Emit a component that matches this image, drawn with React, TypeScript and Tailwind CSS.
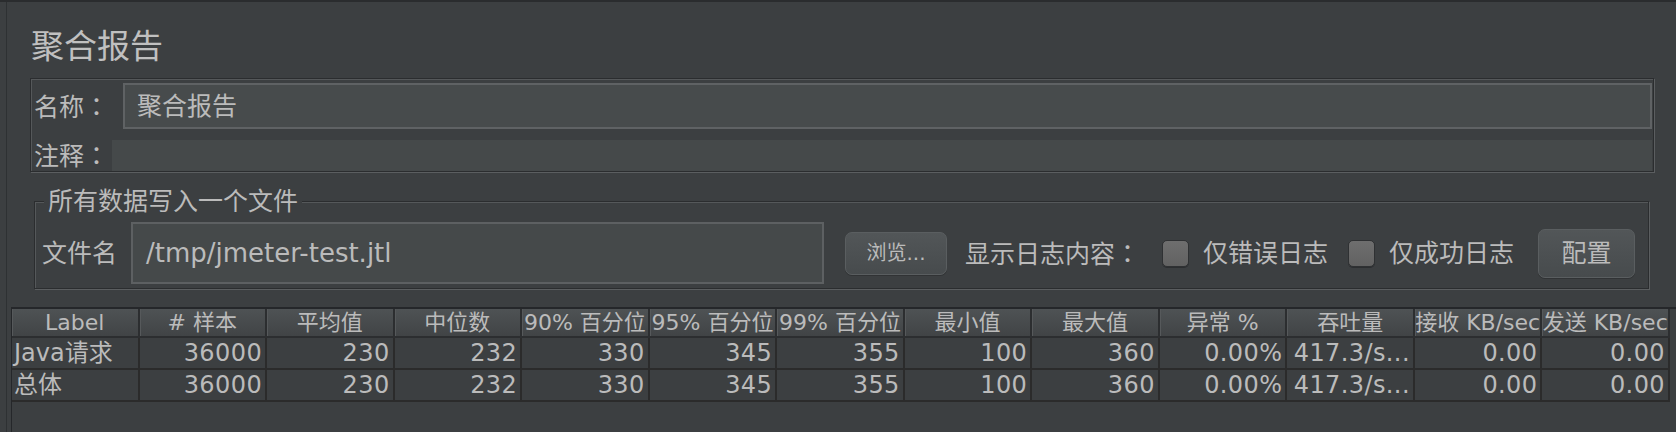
import React from "react";

const columns = [
    "Label", "# 样本", "平均值", "中位数", "90% 百分位", "95% 百分位", "99% 百分位",
    "最小值", "最大值", "异常 %", "吞吐量", "接收 KB/sec", "发送 KB/sec",
];

const rows = [
    ["Java请求", "36000", "230", "232", "330", "345", "355", "100", "360", "0.00%", "417.3/s...", "0.00", "0.00"],
    ["总体", "36000", "230", "232", "330", "345", "355", "100", "360", "0.00%", "417.3/s...", "0.00", "0.00"],
];

// centred full-width colon, as in the Japanese cut of the font
function Colon() {
    return <span className="font-['Noto_Sans_CJK_JP',sans-serif]">：</span>;
}

function Checkbox() {
    return (
        <div className="w-[27px] h-[27px] rounded-[5px] border border-[#2f3133] bg-gradient-to-b from-[#6e6e6e] to-[#626262] shadow-[0_1px_0_#2c2e30]"/>
    );
}

function Button({children, className}: { children: React.ReactNode; className: string }) {
    return (
        <button
            className={"flex items-center justify-center rounded-[7px] border border-[#5a5e60] bg-gradient-to-b from-[#525658] to-[#474b4d] text-[#bbbbbb] shadow-[0_1px_0_#313335] " + className}>
            {children}
        </button>
    );
}

export default function App() {
    return (
        <div
            className="w-[1676px] h-[432px] overflow-hidden bg-[#3c3f41] text-[#bbbbbb] flex flex-col font-['DejaVu_Sans','Noto_Sans_CJK_SC',sans-serif]">
            <div className="h-[2px] bg-[#2a2c2e]"/>
            <div className="flex-1 flex">
                <div className="w-[6px]"/>
                <div className="w-px bg-[#2e3133]"/>
                <div className="flex-1 flex flex-col">
                    {/* title */}
                    <div className="mt-[28px] ml-[24px] text-[33px] leading-[33px] text-[#c0c0c0]">聚合报告</div>

                    {/* name / comment */}
                    <div
                        className="mt-[15px] ml-[23px] w-[1624px] border border-[#2b2d2f] shadow-[1px_1px_0_#5b5e60,inset_1px_1px_0_#55585a] pt-[4px] pr-px">
                        <div className="flex items-center h-[46px]">
                            <div className="w-[92px] pl-[3px] text-[25px] leading-[25px]">名称<Colon/></div>
                            <div
                                className="flex-1 h-[46px] border-2 border-[#5f6264] bg-[#474b4c] flex items-center pl-[12px] text-[25px] leading-[25px]">
                                聚合报告
                            </div>
                        </div>
                        <div className="flex items-center h-[31px] mt-[11px]">
                            <div className="w-[81px] pl-[3px] text-[25px] leading-[25px]">注释<Colon/></div>
                            <div className="flex-1 h-[31px] bg-[#45494a]"/>
                        </div>
                    </div>

                    {/* write results to file */}
                    <fieldset
                        className="mt-[17px] ml-[27px] w-[1615px] min-w-0 border border-[#2b2d2f] shadow-[1px_1px_0_#5b5e60,inset_1px_1px_0_#55585a] pl-[7px] pr-[10px] pt-[8px] pb-[4px]">
                        <legend className="ml-[2px] px-[4px] bg-[#3c3f41] text-[25px] leading-[25px]">所有数据写入一个文件</legend>
                        <div className="flex items-center h-[62px]">
                            <div className="w-[89px] text-[25px] leading-[25px]">文件名</div>
                            <div
                                className="w-[693px] h-[62px] border-2 border-[#5d6062] bg-[#45494a] flex items-center pl-[13px] text-[26px] leading-[26px]">
                                /tmp/jmeter-test.jtl
                            </div>
                            <Button className="ml-[21px] w-[102px] h-[43px] text-[20px] leading-[20px]">浏览...</Button>
                            <div className="ml-[18px] text-[25px] leading-[25px]">显示日志内容<Colon/></div>
                            <div className="ml-[22px]"><Checkbox/></div>
                            <div className="ml-[14px] text-[25px] leading-[25px]">仅错误日志</div>
                            <div className="ml-[20px]"><Checkbox/></div>
                            <div className="ml-[14px] text-[25px] leading-[25px]">仅成功日志</div>
                            <Button className="ml-[24px] w-[97px] h-[49px] text-[25px] leading-[25px]">配置</Button>
                        </div>
                    </fieldset>

                    {/* results table */}
                    <div className="mt-[18px] ml-[4px] flex-1 border-t-2 border-l border-[#25272a]">
                        <div className="w-[1658px] grid grid-cols-[repeat(13,minmax(0,1fr))]">
                            {columns.map((c) => (
                                <div key={c}
                                     className="h-[29px] border-r-2 border-b-2 border-[#2c2e30] bg-gradient-to-b from-[#4e5254] to-[#414446] shadow-[inset_1px_0_0_#56595b] flex items-center justify-center whitespace-nowrap overflow-hidden text-[22px] leading-[22px]">
                                    {c}
                                </div>
                            ))}
                            {rows.map((r, i) =>
                                r.map((v, j) => (
                                    <div key={i + "-" + j}
                                         className={"h-[32px] border-r-2 border-b-2 border-[#2b2b2b] flex items-center whitespace-nowrap overflow-hidden text-[24px] leading-[24px] " + (j === 0 ? "justify-start pl-[2px] text-[23px]" : "justify-end pr-[3px] tracking-[0.4px]")}>
                                        {v}
                                    </div>
                                ))
                            )}
                        </div>
                    </div>
                </div>
            </div>
        </div>
    );
}
